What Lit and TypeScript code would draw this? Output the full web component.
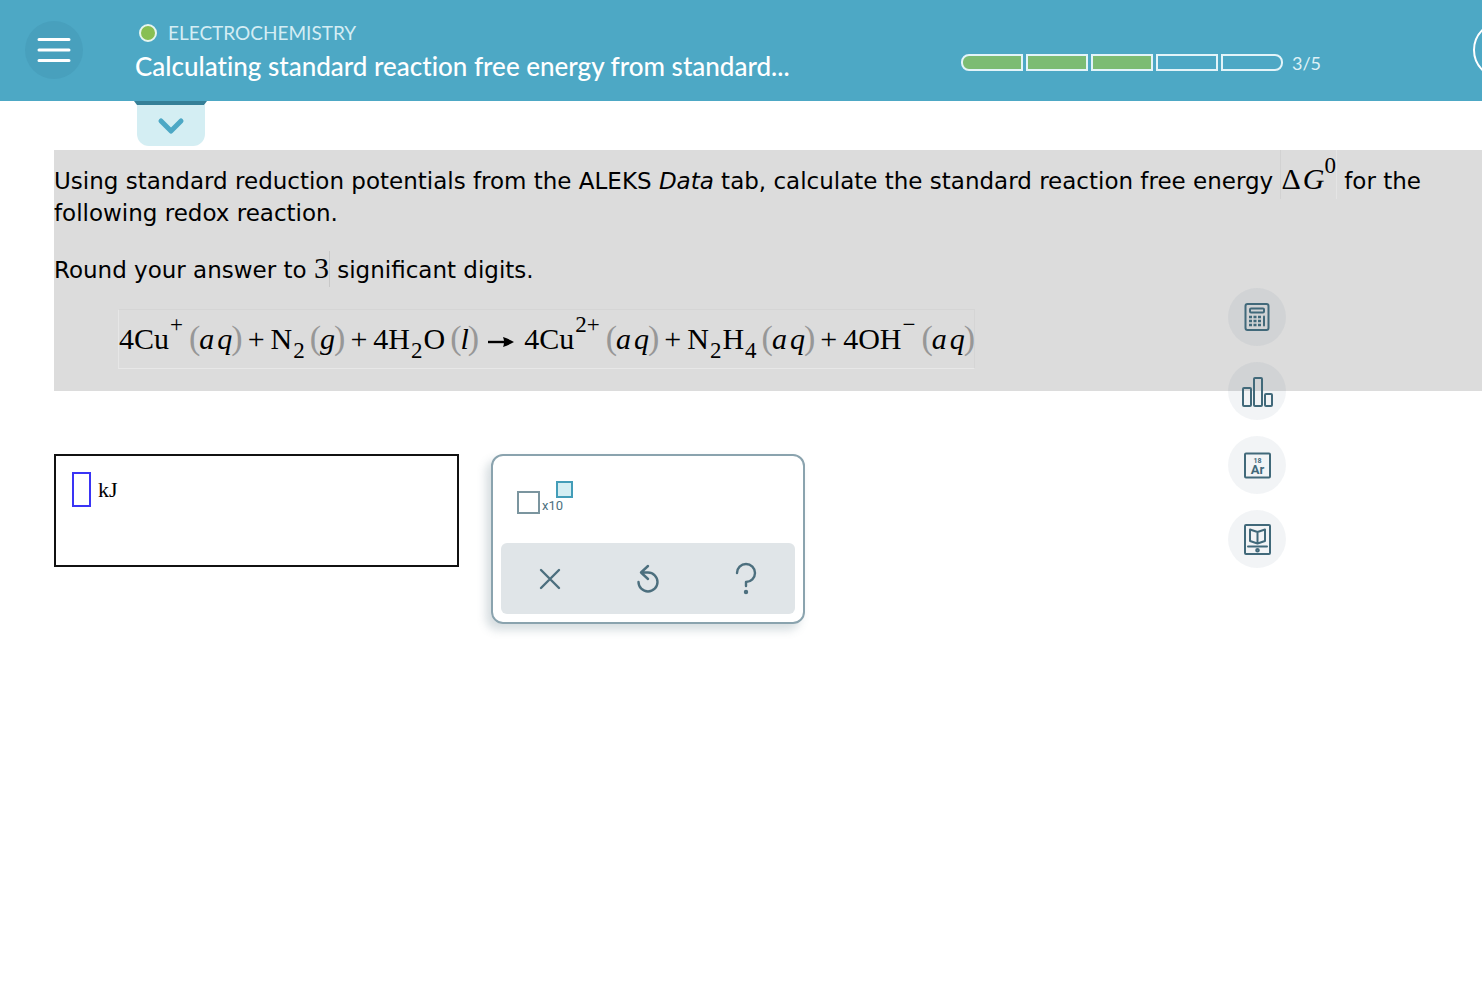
import { LitElement, html, css, svg } from "lit";
import { customElement, property, state } from "lit/decorators.js";
import { classMap } from "lit/directives/class-map.js";

type Species = { kind: "species"; parts: { t: string; pos?: "sup" | "sub" }[]; state: string };
type Sign = { kind: "plus" | "arrow" };
type Token = Species | Sign;

const REACTION: Token[] = [
  { kind: "species", parts: [{ t: "4Cu" }, { t: "+", pos: "sup" }], state: "aq" },
  { kind: "plus" },
  { kind: "species", parts: [{ t: "N" }, { t: "2", pos: "sub" }], state: "g" },
  { kind: "plus" },
  { kind: "species", parts: [{ t: "4H" }, { t: "2", pos: "sub" }, { t: "O" }], state: "l" },
  { kind: "arrow" },
  { kind: "species", parts: [{ t: "4Cu" }, { t: "2+", pos: "sup" }], state: "aq" },
  { kind: "plus" },
  { kind: "species", parts: [{ t: "N" }, { t: "2", pos: "sub" }, { t: "H" }, { t: "4", pos: "sub" }], state: "aq" },
  { kind: "plus" },
  { kind: "species", parts: [{ t: "4OH" }, { t: "−", pos: "sup" }], state: "aq" },
];

@customElement("chem-equation")
export class ChemEquation extends LitElement {
  @property({ attribute: false }) tokens: Token[] = [];

  static styles = css`
    :host {
      display: inline-flex;
      align-items: baseline;
      gap: 6px;
      font: 30px/58px "Liberation Serif", serif;
      color: #000;
    }
    .species {
      display: inline-flex;
      align-items: baseline;
      gap: 6px;
    }
    .formula {
      display: inline-flex;
      align-items: baseline;
      gap: 1px;
    }
    .sup,
    .sub {
      font-size: 23px;
      line-height: 0;
      position: relative;
    }
    .sup {
      top: -17px;
      margin-right: 1px;
    }
    .sub {
      top: 9px;
    }
    .state {
      display: inline-flex;
      align-items: baseline;
      gap: 3px;
      font-style: italic;
    }
    .paren {
      font-style: normal;
      font-size: 34px;
      line-height: 0;
      color: #979797;
    }
    .paren:first-child {
      margin: 0 -4px 0 -1px;
    }
    .paren:last-child {
      margin: 0 -1px 0 -4px;
    }
    .arrow {
      width: 26px;
      height: 12px;
      margin: 6px 4px 0;
      align-self: center;
    }
  `;

  render() {
    return this.tokens.map((tok) => {
      if (tok.kind === "plus") return html`<span>+</span>`;
      if (tok.kind === "arrow")
        return html`<svg class="arrow" viewBox="0 0 26 12" role="img" aria-label="yields">
          <path d="M0 6H18" stroke="#000" stroke-width="2.400" />
          <path d="M15 1Q21 3 26 6Q21 9 15 11Q17 6 15 1Z" />
        </svg>`;
      return html`<span class="species">
        <span class="formula">${tok.parts.map((p) => html`<span class=${p.pos ?? "base"}>${p.t}</span>`)}</span>
        <span class="state"
          ><span class="paren">(</span>${[...tok.state].map((c) => html`<span>${c}</span>`)}<span class="paren">)</span></span
        >
      </span>`;
    });
  }
}

@customElement("progress-steps")
export class ProgressSteps extends LitElement {
  @property({ type: Number }) done = 0;
  @property({ type: Number }) total = 5;

  static styles = css`
    :host {
      display: flex;
      align-items: center;
      gap: 9px;
      color: #dff2f7;
      font: 18px/24px Lato, sans-serif;
    }
    .track {
      display: flex;
      gap: 3px;
    }
    .step {
      box-sizing: border-box;
      width: 62px;
      height: 17px;
      border: 2px solid #e3f4f9;
    }
    .step:first-child {
      border-radius: 8px 0 0 8px;
    }
    .step:last-child {
      border-radius: 0 8px 8px 0;
    }
    .done {
      background: #7cbc73;
    }
  `;

  render() {
    return html`
      <div class="track">
        ${Array.from({ length: this.total }, (_, i) => html`<span class=${classMap({ step: true, done: i < this.done })}></span>`)}
      </div>
      <span>${this.done}/${this.total}</span>
    `;
  }
}

const TOOLS = [
  {
    label: "Calculator",
    icon: svg`<rect x="3.500" y="2" width="23" height="26" rx="2"/><rect x="8" y="6.500" width="14" height="4" rx="1"/>
      <path class="keys" d="M7 15h3M11.500 15h3M16 15h3M7 19h3M11.500 19h3M16 19h3M7 23h3M11.500 23h3M16 23h3"/><path d="M22 14.500v9"/>`,
  },
  {
    label: "Bar chart",
    icon: svg`<rect x="1" y="12" width="8" height="18" rx="1"/><rect x="12" y="2" width="8" height="28" rx="1"/><rect x="23" y="18" width="7" height="12" rx="1"/>`,
  },
  {
    label: "Periodic table",
    icon: svg`<rect x="3" y="3.500" width="25" height="24" rx="1"/>
      <text x="15.500" y="12.500" class="num">18</text><text x="15.500" y="24" class="sym">Ar</text>`,
  },
  {
    label: "Reference book",
    icon: svg`<rect x="3" y="1" width="25" height="29" rx="1"/>
      <path d="M8 5.500L15.500 8L23 5.500V17L15.500 19.500L8 17ZM15.500 8V19.500M6 22.500H25"/><circle cx="15.500" cy="26.300" r="1.300"/>`,
  },
];

@customElement("app-root")
export class AppRoot extends LitElement {
  @state() private answer = "";

  static styles = css`
    :host {
      display: block;
      min-height: 100vh;
      overflow: hidden;
      background: #fff;
      color: #000;
      position: relative;
    }
    button {
      border: 0;
      padding: 0;
      margin: 0;
      background: none;
      cursor: pointer;
      display: flex;
      align-items: center;
      justify-content: center;
    }
    svg {
      fill: none;
      stroke-linecap: round;
      stroke-linejoin: round;
    }
    header {
      display: flex;
      align-items: center;
      box-sizing: border-box;
      height: 101px;
      padding: 0 0 2px 25px;
      background: #4da8c5;
      overflow: hidden;
      font-family: Lato, sans-serif;
    }
    .menu {
      flex: none;
      width: 58px;
      height: 58px;
      border-radius: 50%;
      background: #48a0bd;
    }
    .menu svg {
      width: 34px;
      height: 28px;
      stroke: #fff;
      stroke-width: 3;
    }
    .titles {
      flex: 1;
      min-width: 0;
      margin-left: 52px;
    }
    .topic {
      display: flex;
      align-items: center;
      gap: 11px;
      padding-left: 4px;
      font-size: 19px;
      line-height: 32px;
      color: #d4edf4;
    }
    .dot {
      box-sizing: border-box;
      width: 18px;
      height: 18px;
      border: 2px solid #e6f5ee;
      border-radius: 50%;
      background: #88bf52;
    }
    h1 {
      margin: 0;
      font-size: 26px;
      line-height: 34px;
      font-weight: 500;
      font-variant-ligatures: none;
      color: #fff;
      white-space: nowrap;
    }
    progress-steps {
      margin-top: 26px;
    }
    .round {
      flex: none;
      box-sizing: border-box;
      width: 58px;
      height: 58px;
      border: 2px solid #fff;
      border-radius: 50%;
      margin: 0 -49px 0 152px;
    }
    .drawer {
      display: flex;
      height: 49px;
      padding-left: 134px;
    }
    .drawer button {
      flex-direction: column;
      justify-content: flex-start;
      width: 73px;
      height: 45px;
    }
    .lip {
      width: 73px;
      height: 4px;
      background: #357f97;
      clip-path: polygon(0 0, 100% 0, 70px 100%, 3px 100%);
    }
    .tab {
      display: flex;
      align-items: center;
      justify-content: center;
      width: 68px;
      height: 41px;
      border-radius: 0 0 12px 12px;
      background: #d4eef3;
    }
    .tab svg {
      width: 28px;
      height: 20px;
      stroke: #4da8c5;
      stroke-width: 5;
    }
    .question {
      box-sizing: border-box;
      margin-left: 54px;
      min-height: 241px;
      padding: 15px 48px 21px 0;
      background: #dcdcdc;
      font: 23px/32px "DejaVu Sans", Verdana, sans-serif;
    }
    .question p {
      margin: 0 0 25px;
    }
    .question p + p {
      margin-bottom: 23px;
    }
    .math {
      font-family: "Liberation Serif", serif;
      font-size: 30px;
      line-height: 0;
    }
    .delta {
      padding: 12px 0 4px;
      border-left: 1px solid #d2d2d2;
      border-right: 1px solid #e4e4e4;
    }
    .digit {
      padding-bottom: 3px;
      border-right: 1px solid #c8c8c8;
    }
    .math i {
      margin-left: 2px;
    }
    .math sup {
      font-size: 23px;
      line-height: 0;
      vertical-align: 16px;
    }
    .equation {
      display: inline-block;
      box-sizing: border-box;
      height: 60px;
      margin-left: 64px;
      border: 1px solid #d5d5d5;
      border-left-color: #e6e6e6;
      border-bottom-color: #e8e8e8;
    }
    .work {
      display: flex;
      align-items: flex-start;
      gap: 32px;
      padding: 63px 54px;
    }
    .answer {
      display: flex;
      align-items: flex-start;
      gap: 7px;
      box-sizing: border-box;
      width: 405px;
      height: 113px;
      padding: 16px;
      border: 2px solid #111;
      font: 22px/36px "Liberation Serif", serif;
    }
    .answer input {
      box-sizing: border-box;
      width: 19px;
      height: 35px;
      padding: 0;
      border: 2px solid #3a34f5;
      outline: 0;
      background: #fff;
      font: inherit;
    }
    .palette {
      box-sizing: border-box;
      width: 314px;
      height: 170px;
      border: 2px solid #8aa3ae;
      border-radius: 12px;
      padding: 0 8px 8px;
      box-shadow: -5px 6px 10px rgba(70, 100, 115, 0.22);
      display: flex;
      flex-direction: column;
      justify-content: space-between;
    }
    .power {
      align-items: flex-end;
      align-self: flex-start;
      height: 33px;
      margin: 25px 0 0 16px;
      color: #4c6f7e;
      font: 13px/16px Roboto, sans-serif;
    }
    .base {
      box-sizing: border-box;
      width: 23px;
      height: 23px;
      border: 2px solid #7b959f;
      margin-right: 2px;
    }
    .exp {
      box-sizing: border-box;
      align-self: flex-start;
      width: 17px;
      height: 17px;
      border: 2px solid #439db8;
      background: #d4eef3;
      margin-left: -7px;
    }
    .actions {
      display: flex;
      height: 71px;
      border-radius: 6px;
      background: #e0e5e8;
    }
    .actions button {
      flex: 1;
    }
    .actions svg {
      width: 32px;
      height: 36px;
      stroke: #4c6f7e;
      stroke-width: 2.4;
    }
    .tools {
      position: absolute;
      top: 288px;
      right: 196px;
      display: flex;
      flex-direction: column;
      gap: 16px;
    }
    .tools button {
      width: 58px;
      height: 58px;
      border-radius: 50%;
      background: rgba(76, 105, 126, 0.07);
    }
    .tools svg {
      width: 31px;
      height: 31px;
      stroke: #41697a;
      stroke-width: 2;
    }
    .tools .keys {
      stroke-width: 2.6;
      stroke-linecap: butt;
    }
    .tools text {
      fill: #41697a;
      stroke: none;
      font-family: Roboto, sans-serif;
      font-weight: 700;
      text-anchor: middle;
    }
    .num {
      font-size: 7px;
    }
    .sym {
      font-size: 13px;
    }
  `;

  render() {
    return html`
      <header>
        <button class="menu" aria-label="Menu">
          <svg viewBox="0 0 34 28"><path d="M2 3.500H32M2 14H32M2 24.500H32" /></svg>
        </button>
        <div class="titles">
          <div class="topic"><span class="dot"></span>ELECTROCHEMISTRY</div>
          <h1>Calculating standard reaction free energy from standard...</h1>
        </div>
        <progress-steps done="3" total="5"></progress-steps>
        <button class="round" aria-label="Account"></button>
      </header>
      <div class="drawer">
        <button aria-label="Show details">
          <span class="lip"></span>
          <span class="tab"><svg viewBox="0 0 28 20"><path d="M4 5L14 15L24 5" /></svg></span>
        </button>
      </div>
      <main>
        <section class="question">
          <p>
            Using standard reduction potentials from the ALEKS <em>Data</em> tab, calculate the standard reaction free energy
            <span class="math delta">Δ<i>G</i><sup>0</sup></span> for the <span>following redox reaction.</span>
          </p>
          <p>Round your answer to <span class="math digit">3</span> significant digits.</p>
          <div class="equation"><chem-equation .tokens=${REACTION}></chem-equation></div>
        </section>
        <section class="work">
          <div class="answer">
            <input
              id="answer"
              type="text"
              .value=${this.answer}
              @input=${(e: Event) => (this.answer = (e.target as HTMLInputElement).value)}
            />
            <label for="answer">kJ</label>
          </div>
          <div class="palette">
            <button class="power" aria-label="Times ten to a power">
              <span class="base"></span><span>x10</span><span class="exp"></span>
            </button>
            <div class="actions">
              <button aria-label="Clear"><svg viewBox="0 0 32 36"><path d="M7 9L25 27M25 9L7 27" /></svg></button>
              <button aria-label="Reset">
                <svg viewBox="0 0 32 36"><path d="M6.500 21A9.500 9.500 0 1 0 16 11.500H9M16 5L9 11.500L16 18" /></svg>
              </button>
              <button aria-label="Help">
                <svg viewBox="0 0 32 36">
                  <path d="M7 12A9 9 0 1 1 16 21V25" /><circle cx="16" cy="31" r="1" fill="#4c6f7e" />
                </svg>
              </button>
            </div>
          </div>
        </section>
      </main>
      <nav class="tools" aria-label="Tools">
        ${TOOLS.map((t) => html`<button aria-label=${t.label}><svg viewBox="0 0 31 31">${t.icon}</svg></button>`)}
      </nav>
    `;
  }
}
